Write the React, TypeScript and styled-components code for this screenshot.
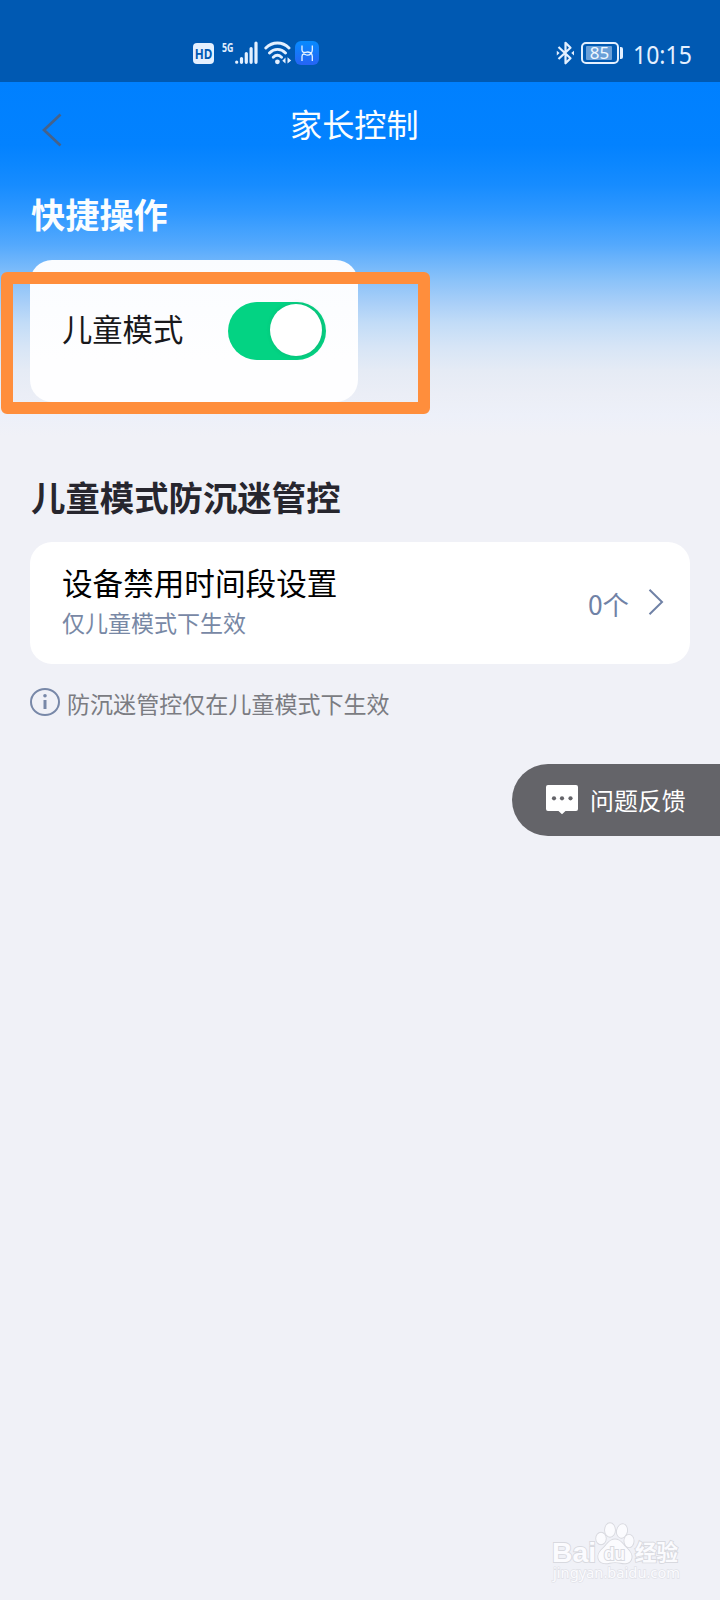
import React from "react";
import styled, { createGlobalStyle } from "styled-components";

const GlobalStyle = createGlobalStyle`
  *, *::before, *::after { box-sizing: border-box; }
  body {
    margin: 0;
    background: #f0f1f7;
    font-family: "Noto Sans CJK SC", "Noto Sans", sans-serif;
  }
`;

const Screen = styled.div`
  position: relative;
  display: flex;
  flex-direction: column;
  width: 720px;
  height: 1600px;
  overflow: hidden;
  background: linear-gradient(
      180deg,
      #0080ff 82px,
      #0382ff 145px,
      #0c87ff 165px,
      #178cff 185px,
      #2f98ff 213px,
      #54a9fd 245px,
      #6cb4fb 260px,
      #8ac2f9 280px,
      #a9cff8 303px,
      #c2dcf7 323px,
      #d7e5f6 347px,
      #e5ebf5 370px,
      #ebeef6 395px,
      #edf0f9 415px,
      #f0f1f7 436px
    )
    #f0f1f7;
`;

const StatusBar = styled.header`
  display: flex;
  justify-content: space-between;
  height: 82px;
  flex: none;
  padding: 38px 27px 0 193px;
  background: #0059b2;
`;

const StatusGroup = styled.div`
  display: flex;
  align-items: center;
  height: 30px;
`;

const HdBadge = styled.span`
  display: flex;
  align-items: center;
  justify-content: center;
  width: 21px;
  height: 21px;
  margin-top: 1px;
  border-radius: 4px;
  background: #e4f0ff;
  color: #0059b2;

  span {
    font: 700 14px/21px "Noto Sans", sans-serif;
    transform: scaleX(0.84);
  }
`;

const NetworkLabel = styled.span`
  align-self: flex-start;
  width: 13px;
  margin: 1px 0 0 8px;
  color: #e4f0ff;
  font: 700 13px/16px "Open Sans", sans-serif;
  white-space: nowrap;

  span {
    display: inline-block;
    transform: scaleX(0.68);
    transform-origin: left;
  }
`;

const SignalIcon = styled.svg`
  width: 24px;
  height: 24px;
`;

const WifiIcon = styled.svg`
  width: 28px;
  height: 24px;
  margin-left: 5px;
`;

const AppIcon = styled.svg`
  width: 24px;
  height: 24px;
  margin: 0 0 0 3px;
`;

const BluetoothIcon = styled.svg`
  width: 19px;
  height: 26px;
`;

const Battery = styled.span`
  position: relative;
  display: flex;
  align-items: center;
  width: 38px;
  height: 22px;
  margin-left: 6px;
  padding: 2px;
  border: 2px solid #e4f0ff;
  border-radius: 5px;

  &::after {
    content: "";
    position: absolute;
    right: -6px;
    top: 3px;
    width: 3px;
    height: 12px;
    border-radius: 0 2px 2px 0;
    background: #e4f0ff;
  }
`;

const BatteryLevel = styled.span`
  display: flex;
  align-items: center;
  justify-content: center;
  width: 26px;
  height: 14px;
  margin-left: 1px;
  border-radius: 1px;
  background: #6a9fd8;
  color: #f0f8ff;
  font: 400 17px/14px "Noto Sans", sans-serif;
  padding-left: 1px;
`;

const Clock = styled.time`
  margin: 3px 0 0 14px;
  color: #e4f0ff;
  font: 400 24.5px/30px "Noto Sans", sans-serif;
  width: 60px;
  white-space: nowrap;

  span {
    display: inline-block;
    transform: scaleX(0.94);
    transform-origin: left;
  }
`;

const NavBar = styled.nav`
  display: flex;
  align-items: flex-start;
  height: 94px;
  flex: none;
  padding: 31px 0 0 41px;
`;

const BackIcon = styled.svg`
  width: 22px;
  height: 34px;
`;

const NavTitle = styled.h1`
  width: 130px;
  margin: -14px 0 0 227px;
  color: #fafdff;
  font-size: 32.2px;
  font-weight: 400;
  line-height: 48px;
  white-space: nowrap;
`;

const Content = styled.main`
  display: flex;
  flex-direction: column;
  padding: 0 30px;
`;

const SectionTitle = styled.h2<{ $light?: boolean }>`
  margin: ${(p) => (p.$light ? "12px 0 22px" : "69px 0 21px")};
  padding-left: 1px;
  color: ${(p) => (p.$light ? "#fafdff" : "#27262e")};
  font-size: ${(p) => (p.$light ? "34.2px" : "34.4px")};
  font-weight: 700;
  line-height: 50px;
`;

const ModeCard = styled.section`
  display: flex;
  align-items: center;
  justify-content: space-between;
  width: 328px;
  height: 142px;
  padding: 0 32px;
  border-radius: 22px;
  background: linear-gradient(#fafcff, #fefeff 70%);
`;

const ModeLabel = styled.span`
  color: #18181b;
  font-size: 30.3px;
  line-height: 44px;
  margin-top: -6px;
`;

const Toggle = styled.button`
  display: flex;
  align-items: center;
  justify-content: flex-end;
  width: 98px;
  height: 58px;
  padding: 0 4px 2px;
  border: 0;
  border-radius: 29px;
  background: #03d383;
`;

const ToggleKnob = styled.span`
  width: 52px;
  height: 52px;
  border-radius: 50%;
  background: #fff;
  box-shadow: 1px 0 4px rgba(60, 90, 80, 0.25);
`;

const SettingCard = styled.section`
  display: flex;
  align-items: flex-start;
  justify-content: space-between;
  height: 122px;
  padding: 17px 26px 0 32px;
  border-radius: 22px;
  background: #fff;
`;

const SettingText = styled.div`
  display: flex;
  flex-direction: column;
`;

const SettingName = styled.span`
  color: #000;
  font-size: 30.6px;
  line-height: 46px;
`;

const SettingHint = styled.span`
  color: #7888a5;
  font-size: 23px;
  line-height: 34px;
`;

const SettingValue = styled.div`
  display: flex;
  align-items: center;
  margin-top: 25px;
  color: #7082a6;
  font-size: 26.4px;
  line-height: 40px;
`;

const ChevronIcon = styled.svg`
  width: 16px;
  height: 28px;
  margin: -4px 0 0 19px;
`;

const Note = styled.p`
  display: flex;
  align-items: center;
  gap: 7px;
  margin: 22px 0 0;
  color: #7b7c82;
  font-size: 23.05px;
  line-height: 34px;
`;

const InfoIcon = styled.svg`
  width: 30px;
  height: 30px;
  margin-top: -2px;
`;

const FeedbackButton = styled.button`
  display: flex;
  align-items: center;
  align-self: flex-end;
  width: 208px;
  height: 72px;
  margin-top: 44px;
  padding: 0 0 0 34px;
  border: 0;
  border-radius: 36px 0 0 36px;
  background: #646469;
  color: #fff;
  font: 400 23.9px/36px "Noto Sans CJK SC", sans-serif;
  gap: 12px;
  white-space: nowrap;
`;

const MessageIcon = styled.svg`
  width: 32px;
  height: 30px;
  flex: none;
`;

const HighlightFrame = styled.div`
  position: absolute;
  left: 1px;
  top: 272px;
  width: 429px;
  height: 142px;
  border: 12px solid #ff8e3c;
  border-radius: 6px;
  pointer-events: none;
`;

const Watermark = styled.svg`
  position: absolute;
  left: 548px;
  top: 1518px;
  width: 140px;
  height: 66px;
`;

export default function App() {
  return (
    <>
      <GlobalStyle />
      <Screen>
        <StatusBar>
          <StatusGroup>
            <HdBadge>
              <span>HD</span>
            </HdBadge>
            <NetworkLabel>
              <span>5G</span>
            </NetworkLabel>
            <SignalIcon viewBox="0 0 24 24" stroke="#e4f0ff" strokeWidth="3.2" strokeLinecap="round">
              <path d="M1.7 21v.2M6.5 17.5v3.8M11.3 12.5v8.8M16.1 7.5v13.8M21 2v19.3" />
            </SignalIcon>
            <WifiIcon viewBox="0 0 28 24" fill="none" stroke="#e4f0ff" strokeWidth="2.9" strokeLinecap="round">
              <path d="M1.8 7C8.5.3 18.5.3 25 7M5.5 12c4.6-4.8 11.4-4.8 16 0M9.3 16.3c2.5-2.4 5.7-2.4 8.2 0" />
              <circle cx="13.4" cy="20.8" r="2.4" fill="#e4f0ff" stroke="none" />
              <path d="M21.5 16.5v6l-3.2-2.8zM23.5 22.5v-6.3l3.7 3.4z" fill="#e4f0ff" stroke="none" />
            </WifiIcon>
            <AppIcon viewBox="0 0 24 24" fill="none">
              <defs>
                <linearGradient id="app-tile" x1="0" y1="0" x2="0" y2="1">
                  <stop offset="0" stopColor="#078bff" />
                  <stop offset="1" stopColor="#2664f4" />
                </linearGradient>
              </defs>
              <rect width="24" height="24" rx="6" fill="url(#app-tile)" />
              <path
                d="M7 4.500v4.500c0 2 1.700 2.800 3.600 2.300 3.300-.9 6.700.6 6.700 4V20M17.300 4.500v4.500c0 3-2.300 5.300-5 5.200-1.700 0-2.400-1.400-3.700-1.200-1 .2-1.600 1.200-1.600 2.500V20"
                stroke="#e8f4ff"
                strokeWidth="1.3"
              />
            </AppIcon>
          </StatusGroup>
          <StatusGroup>
            <BluetoothIcon viewBox="0 0 19 26" fill="none" stroke="#e4f0ff" strokeWidth="2.2" strokeLinejoin="round">
              <path d="M2.5 7l12 11.2-5 5.1V2.8l5 5L2.5 19" />
              <path d="M.8 10.8l2.8 2.3-2.8 2.3zM18 10.8l-2.8 2.3 2.8 2.3z" fill="#e4f0ff" stroke="none" />
            </BluetoothIcon>
            <Battery>
              <BatteryLevel>85</BatteryLevel>
            </Battery>
            <Clock>
              <span>10:15</span>
            </Clock>
          </StatusGroup>
        </StatusBar>

        <NavBar>
          <BackIcon viewBox="0 0 22 34" fill="none" stroke="#46628a" strokeWidth="2.7">
            <path d="M19.5 1.5L3 17l16.5 15.5" />
          </BackIcon>
          <NavTitle>家长控制</NavTitle>
        </NavBar>

        <Content>
          <SectionTitle $light>快捷操作</SectionTitle>
          <ModeCard>
            <ModeLabel>儿童模式</ModeLabel>
            <Toggle type="button" role="switch" aria-checked="true">
              <ToggleKnob />
            </Toggle>
          </ModeCard>

          <SectionTitle>儿童模式防沉迷管控</SectionTitle>
          <SettingCard>
            <SettingText>
              <SettingName>设备禁用时间段设置</SettingName>
              <SettingHint>仅儿童模式下生效</SettingHint>
            </SettingText>
            <SettingValue>
              0个
              <ChevronIcon viewBox="0 0 16 28" fill="none" stroke="#7082a6" strokeWidth="2">
                <path d="M1.5 1.8L14 14 1.5 26.2" />
              </ChevronIcon>
            </SettingValue>
          </SettingCard>
          <Note>
            <InfoIcon viewBox="0 0 30 30" fill="none" stroke="#7888a8">
              <ellipse cx="15" cy="15" rx="14" ry="13" strokeWidth="2" />
              <path d="M15 13v9" strokeWidth="3" />
              <circle cx="15" cy="8.800" r="1.8" fill="#7888a8" stroke="none" />
            </InfoIcon>
            防沉迷管控仅在儿童模式下生效
          </Note>
        </Content>

        <FeedbackButton type="button">
          <MessageIcon viewBox="0 0 32 30">
            <path d="M2 0h28a2 2 0 012 2v22a2 2 0 01-2 2H19.5L16 29.3 12.5 26H2a2 2 0 01-2-2V2a2 2 0 012-2z" fill="#fff" />
            <g fill="#646469">
              <circle cx="8" cy="13.3" r="2.1" />
              <circle cx="16" cy="13.3" r="2.1" />
              <circle cx="24.5" cy="13.3" r="2.1" />
            </g>
          </MessageIcon>
          问题反馈
        </FeedbackButton>

        <HighlightFrame />

        <Watermark viewBox="0 0 140 66" fill="#fbfbfe" stroke="#d8d9df" strokeWidth="1.8" paintOrder="stroke">
          <text x="4" y="43.5" fontFamily="Liberation Sans, sans-serif" fontWeight="700" fontSize="28.5" textLength="44" lengthAdjust="spacingAndGlyphs">
            Bai
          </text>
          <ellipse cx="53" cy="20.5" rx="4.8" ry="5.800" />
          <ellipse cx="62" cy="12" rx="5" ry="6.800" />
          <ellipse cx="74" cy="13" rx="5" ry="6.800" transform="rotate(12 74 13)" />
          <ellipse cx="81" cy="23" rx="4.6" ry="6.2" />
          <path d="M67 21.5c-5.5 0-7.5 4.5-11 8-4.5 4-6.5 7-5.5 11 1.2 5 7 5.5 11 4.3 3.5-.8 7.5-.8 11 0 5 1.2 10 .5 11-4.8.8-4-2-7-5.5-10.5-3.5-3.5-5.5-8-11-8z" />
          <text x="56" y="41.5" fontFamily="Liberation Sans, sans-serif" fontWeight="700" fontSize="18" strokeWidth="2" textLength="21" lengthAdjust="spacingAndGlyphs">
            du
          </text>
          <text x="87" y="42" fontFamily="Noto Sans CJK SC, sans-serif" fontWeight="700" fontSize="21.5" textLength="43" lengthAdjust="spacingAndGlyphs">
            经验
          </text>
          <text x="5" y="60" fontFamily="Noto Sans, sans-serif" fontSize="14.5" strokeWidth="1.3" stroke="#e0e1e7" textLength="127" lengthAdjust="spacingAndGlyphs">
            jingyan.baidu.com
          </text>
        </Watermark>
      </Screen>
    </>
  );
}
